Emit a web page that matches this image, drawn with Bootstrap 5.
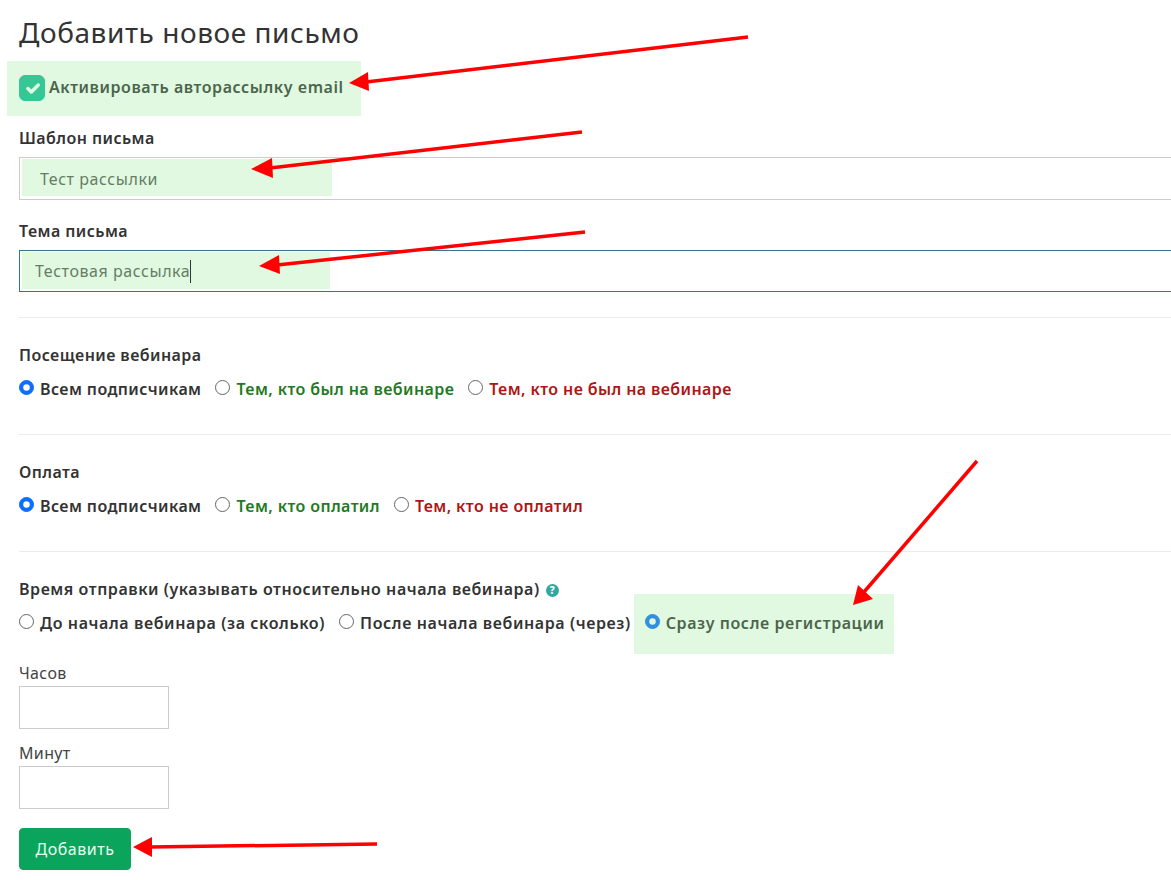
<!DOCTYPE html>
<html lang="ru">
<head>
<meta charset="utf-8">
<title>Добавить новое письмо</title>
<link href="https://cdn.jsdelivr.net/npm/bootstrap@5.3.0/dist/css/bootstrap.min.css" rel="stylesheet">
<style>
html,body{height:880px;overflow:hidden;background:#fff}
body{font-family:"Noto Sans","Open Sans",sans-serif;color:#333;position:relative;font-size:16px}
.sheet{width:1200px;padding:0 0 0 19px}
.ttl{font-size:28px;font-weight:400;line-height:34px;margin:15px 0 0;color:#333;letter-spacing:.57px}
.autorow{height:26px;margin-top:26px;gap:4px}
.autorow input.form-check-input{width:26px;height:26px;margin:0;border-radius:6px;background-color:#14bb97;border-color:#14bb97;background-size:23px}
.autorow label{font-weight:600;font-size:16px;color:#333;letter-spacing:.56px;margin-top:-2px}
.flabel{font-weight:600;font-size:16px;letter-spacing:.43px;line-height:20px;margin:0 0 9px;color:#333;display:block}
.flabel.longer{letter-spacing:.55px}
.tplblock{margin-top:27px}
.subjblock{margin-top:21px}
.finput{border:1px solid #ccc;border-radius:0;height:43px;font-size:16px;color:#555;padding:0 20px;box-shadow:none;letter-spacing:.55px}
.finput.activebox{border-color:#35768c;padding:0 15px;height:42px}
.divline{border-top:1px solid #e9ecef;height:0;margin:25px 0 0;opacity:1}
.divline.wide{margin-top:35px}
.groupblock{margin-top:27px}
.groupblock .flabel{margin-bottom:14px}
.optline{gap:14px;font-weight:600;font-size:16px;letter-spacing:.4px;line-height:20px}
.optline.longer{letter-spacing:.6px}
.optline label{color:#333}
.optline .form-check{margin:0;padding:0;min-height:0;display:flex;align-items:center;gap:6px}
.optline .form-check-input{width:15px;height:15px;margin:-4px 0 0;float:none;border:1px solid #666}
.optline .form-check-input:checked{background-color:#0d6efd;border-color:#0d6efd}
.optline label.okc{color:#1f7a24}
.optline label.noc{color:#b01515}
.qmark{display:inline-block;width:13px;height:13px;border-radius:50%;background:#2ea9a0;color:#fff;font-size:10px;font-weight:800;letter-spacing:0;line-height:13px;text-align:center;margin-left:6px;vertical-align:1px}
.hoursblock{margin-top:29px}
.minsblock{margin-top:13px}
.smlabel{font-size:16px;letter-spacing:.35px;line-height:22px;margin:0 0 2px;display:block;color:#444}
.tinyinput{width:150px;height:43px;border:1px solid #ccc;border-radius:0}
.addbtn{background:#0aa45c;border:1px solid #0aa45c;color:#e8fff2;font-size:16px;letter-spacing:.55px;width:112px;height:42px;border-radius:4px;padding:0;margin-top:19px}
.hl{position:absolute;background:rgba(144,233,144,.27);pointer-events:none}
.hl1{left:7px;top:61px;width:354px;height:55px}
.hl2{left:22px;top:159px;width:310px;height:37px}
.hl3{left:22px;top:252px;width:308px;height:37px}
.hl4{left:634px;top:594px;width:260px;height:60px}
.caret-mark{position:absolute;left:190px;top:260px;width:1px;height:23px;background:#333}
.arrows{position:absolute;left:0;top:0;pointer-events:none}
</style>
</head>
<body>
<div class="sheet">
  <h1 class="ttl">Добавить новое письмо</h1>
  <div class="autorow d-flex align-items-center">
    <input class="form-check-input" type="checkbox" id="ch1" checked>
    <label for="ch1">Активировать авторассылку email</label>
  </div>
  <div class="tplblock">
    <label class="flabel">Шаблон письма</label>
    <input class="form-control finput" value="Тест рассылки">
  </div>
  <div class="subjblock">
    <label class="flabel">Тема письма</label>
    <input class="form-control finput activebox" value="Тестовая рассылка">
  </div>
  <hr class="divline">
  <div class="groupblock">
    <div class="flabel">Посещение вебинара</div>
    <div class="optline d-flex">
      <div class="form-check"><input class="form-check-input" type="radio" name="a" id="a1" checked><label for="a1">Всем подписчикам</label></div>
      <div class="form-check"><input class="form-check-input" type="radio" name="a" id="a2"><label for="a2" class="okc">Тем, кто был на вебинаре</label></div>
      <div class="form-check"><input class="form-check-input" type="radio" name="a" id="a3"><label for="a3" class="noc">Тем, кто не был на вебинаре</label></div>
    </div>
  </div>
  <hr class="divline wide">
  <div class="groupblock">
    <div class="flabel">Оплата</div>
    <div class="optline d-flex">
      <div class="form-check"><input class="form-check-input" type="radio" name="b" id="b1" checked><label for="b1">Всем подписчикам</label></div>
      <div class="form-check"><input class="form-check-input" type="radio" name="b" id="b2"><label for="b2" class="okc">Тем, кто оплатил</label></div>
      <div class="form-check"><input class="form-check-input" type="radio" name="b" id="b3"><label for="b3" class="noc">Тем, кто не оплатил</label></div>
    </div>
  </div>
  <hr class="divline wide">
  <div class="groupblock">
    <div class="flabel longer">Время отправки (указывать относительно начала вебинара)<span class="qmark">?</span></div>
    <div class="optline longer d-flex">
      <div class="form-check"><input class="form-check-input" type="radio" name="c" id="c1"><label for="c1">До начала вебинара (за сколько)</label></div>
      <div class="form-check"><input class="form-check-input" type="radio" name="c" id="c2"><label for="c2">После начала вебинара (через)</label></div>
      <div class="form-check"><input class="form-check-input" type="radio" name="c" id="c3" checked><label for="c3">Сразу после регистрации</label></div>
    </div>
  </div>
  <div class="hoursblock">
    <label class="smlabel">Часов</label>
    <input class="form-control tinyinput">
  </div>
  <div class="minsblock">
    <label class="smlabel">Минут</label>
    <input class="form-control tinyinput">
  </div>
  <button class="btn addbtn">Добавить</button>
</div>

<div class="hl hl1"></div>
<div class="hl hl2"></div>
<div class="hl hl3"></div>
<div class="hl hl4"></div>
<div class="caret-mark"></div>

<svg class="arrows" width="1171" height="880" viewBox="0 0 1171 880" fill="#f00" stroke="none">
  <g stroke="#f00" stroke-width="3.5" fill="none">
    <path d="M748 37L366 82"/>
    <path d="M582 132L270 168"/>
    <path d="M585 232L277 265"/>
    <path d="M977 461L864 592"/>
    <path d="M377 844L150 847"/>
  </g>
  <path d="M349 83L368 72L369 91Z"/>
  <path d="M251 169L272 158L273 178Z"/>
  <path d="M259 266L279 255L280 274Z"/>
  <path d="M853 605L858 585L873 599Z"/>
  <path d="M133 847L152 837L152 857Z"/>
</svg>
</body>
</html>
